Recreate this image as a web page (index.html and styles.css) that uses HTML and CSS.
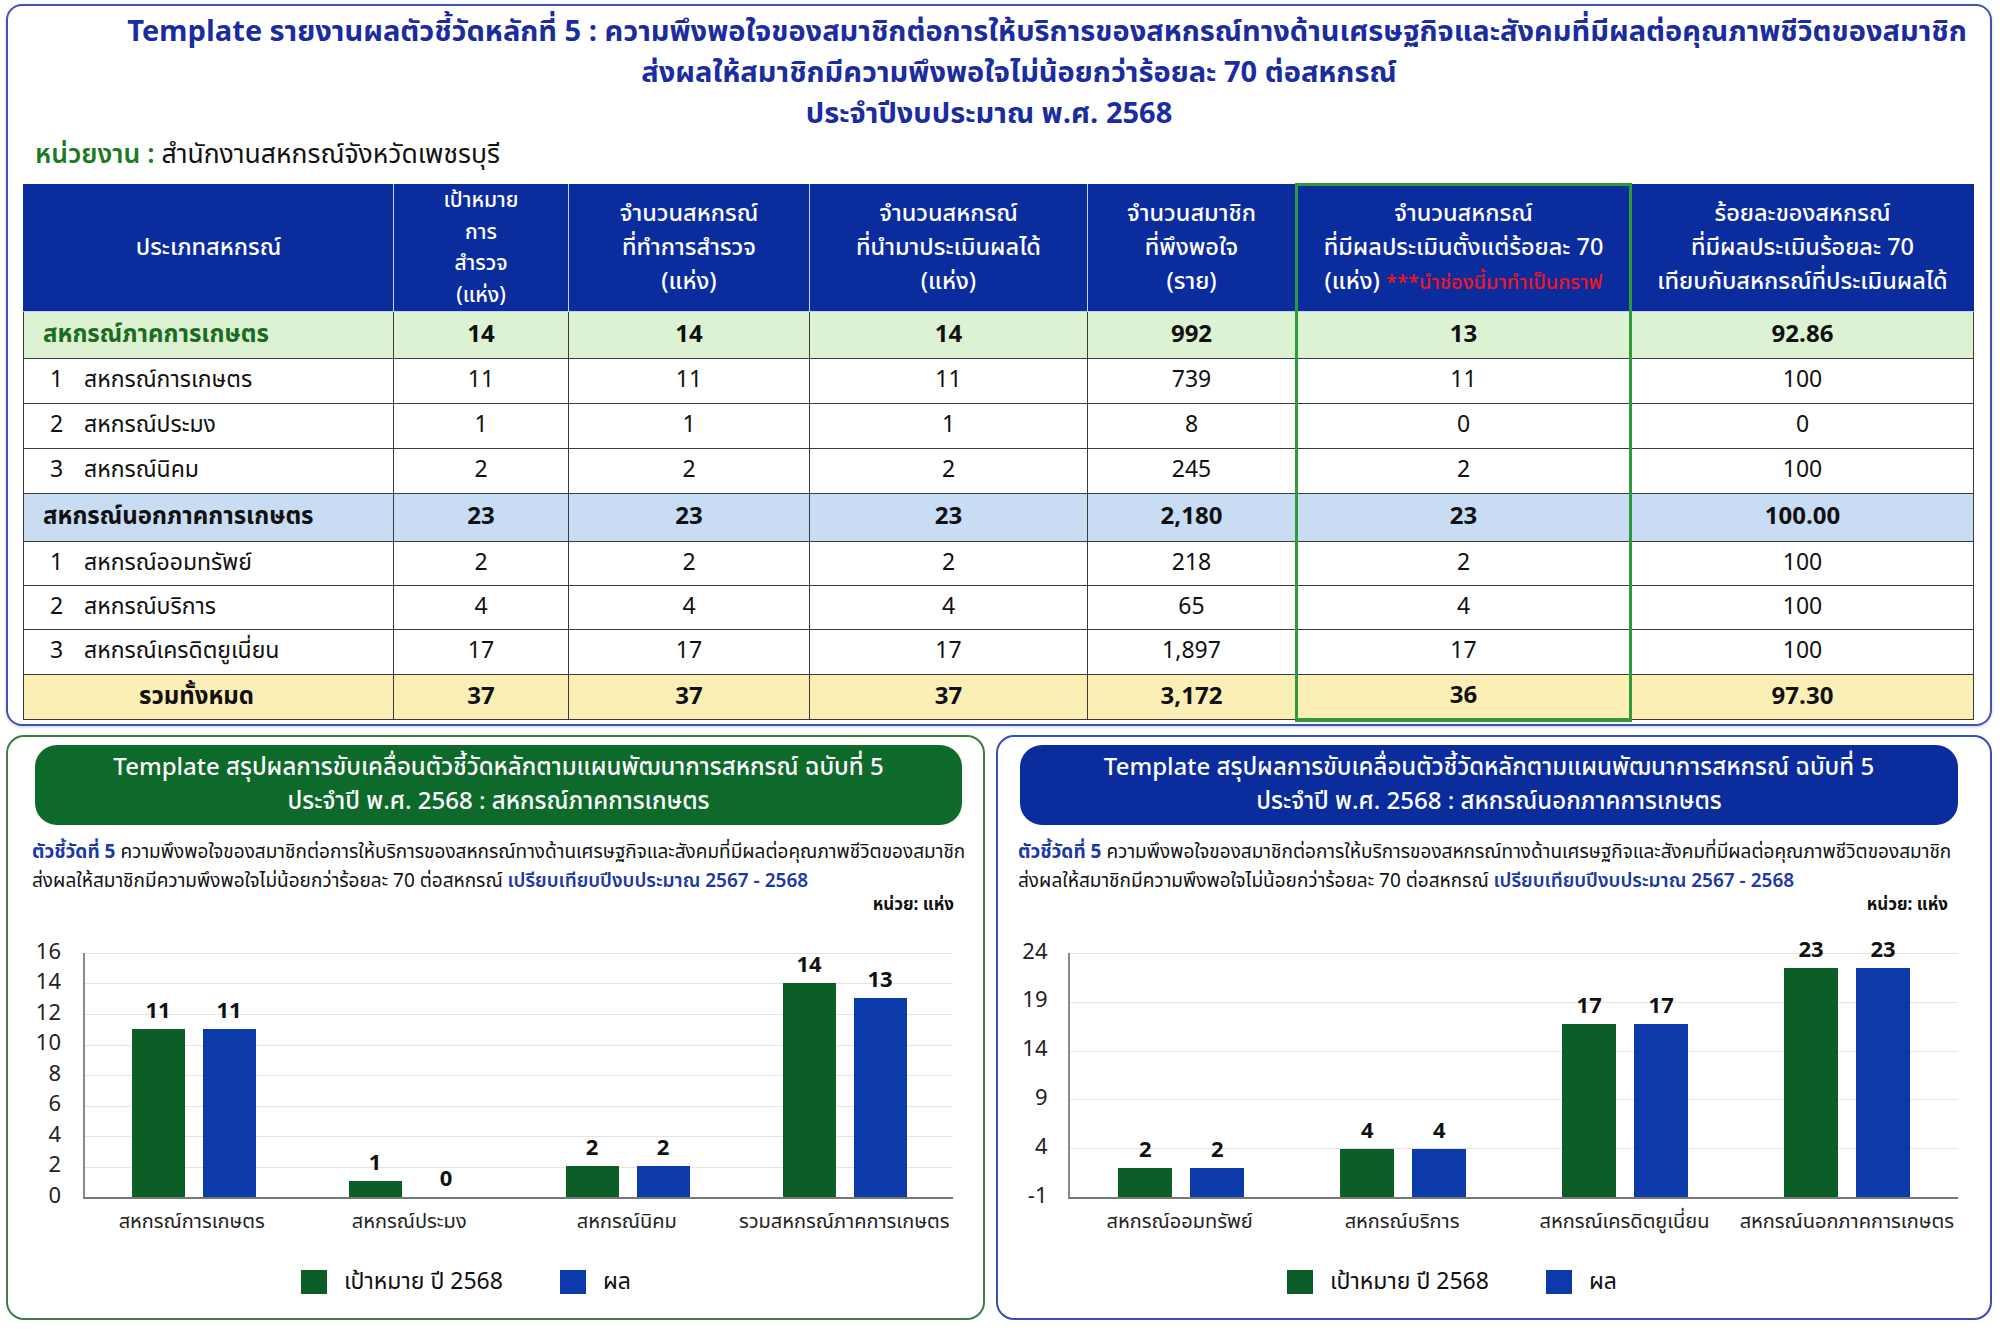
FILE: index.html
```html
<!DOCTYPE html>
<html lang="th">
<head>
<meta charset="utf-8">
<title>Template รายงานผลตัวชี้วัดหลักที่ 5</title>
<link rel="stylesheet" href="styles.css">
</head>
<body>
<div class="page">
  <section class="top-panel">
    <h1 class="title">
      <span class="t-line t1">Template รายงานผลตัวชี้วัดหลักที่ 5 : ความพึงพอใจของสมาชิกต่อการให้บริการของสหกรณ์ทางด้านเศรษฐกิจและสังคมที่มีผลต่อคุณภาพชีวิตของสมาชิก</span>
      <span class="t-line t2">ส่งผลให้สมาชิกมีความพึงพอใจไม่น้อยกว่าร้อยละ 70 ต่อสหกรณ์</span>
      <span class="t-line t3">ประจำปีงบประมาณ พ.ศ. 2568</span>
    </h1>
    <div class="agency"><span class="agency-label">หน่วยงาน :</span> สำนักงานสหกรณ์จังหวัดเพชรบุรี</div>
    <table class="report">
      <colgroup>
        <col class="c1"><col class="c2"><col class="c3"><col class="c4"><col class="c5"><col class="c6"><col class="c7">
      </colgroup>
      <thead>
        <tr>
          <th>ประเภทสหกรณ์</th>
          <th class="tight">เป้าหมาย<br>การ<br>สำรวจ<br>(แห่ง)</th>
          <th>จำนวนสหกรณ์<br>ที่ทำการสำรวจ<br>(แห่ง)</th>
          <th>จำนวนสหกรณ์<br>ที่นำมาประเมินผลได้<br>(แห่ง)</th>
          <th>จำนวนสมาชิก<br>ที่พึงพอใจ<br>(ราย)</th>
          <th class="hl">จำนวนสหกรณ์<br>ที่มีผลประเมินตั้งแต่ร้อยละ 70<br>(แห่ง) <span class="note">***นำช่องนี้มาทำเป็นกราฟ</span></th>
          <th>ร้อยละของสหกรณ์<br>ที่มีผลประเมินร้อยละ 70<br>เทียบกับสหกรณ์ที่ประเมินผลได้</th>
        </tr>
      </thead>
      <tbody>
        <tr class="grp green-row">
          <td class="name grp-name">สหกรณ์ภาคการเกษตร</td><td>14</td><td>14</td><td>14</td><td>992</td><td class="hl">13</td><td>92.86</td>
        </tr>
        <tr class="row">
          <td class="name"><span class="no">1</span>สหกรณ์การเกษตร</td><td>11</td><td>11</td><td>11</td><td>739</td><td class="hl">11</td><td>100</td>
        </tr>
        <tr class="row">
          <td class="name"><span class="no">2</span>สหกรณ์ประมง</td><td>1</td><td>1</td><td>1</td><td>8</td><td class="hl">0</td><td>0</td>
        </tr>
        <tr class="row">
          <td class="name"><span class="no">3</span>สหกรณ์นิคม</td><td>2</td><td>2</td><td>2</td><td>245</td><td class="hl">2</td><td>100</td>
        </tr>
        <tr class="grp blue-row">
          <td class="name">สหกรณ์นอกภาคการเกษตร</td><td>23</td><td>23</td><td>23</td><td>2,180</td><td class="hl">23</td><td>100.00</td>
        </tr>
        <tr class="row r2">
          <td class="name"><span class="no">1</span>สหกรณ์ออมทรัพย์</td><td>2</td><td>2</td><td>2</td><td>218</td><td class="hl">2</td><td>100</td>
        </tr>
        <tr class="row r2">
          <td class="name"><span class="no">2</span>สหกรณ์บริการ</td><td>4</td><td>4</td><td>4</td><td>65</td><td class="hl">4</td><td>100</td>
        </tr>
        <tr class="row">
          <td class="name"><span class="no">3</span>สหกรณ์เครดิตยูเนี่ยน</td><td>17</td><td>17</td><td>17</td><td>1,897</td><td class="hl">17</td><td>100</td>
        </tr>
        <tr class="grp total-row">
          <td class="total-name">รวมทั้งหมด</td><td>37</td><td>37</td><td>37</td><td>3,172</td><td class="hl hl-last">36</td><td>97.30</td>
        </tr>
      </tbody>
    </table>
  </section>

  <div class="bottom">
    <section class="chart-panel panel-green">
      <div class="banner banner-green">Template สรุปผลการขับเคลื่อนตัวชี้วัดหลักตามแผนพัฒนาการสหกรณ์ ฉบับที่ 5<br>ประจำปี พ.ศ. 2568 : สหกรณ์ภาคการเกษตร</div>
      <p class="desc"><b class="kpi">ตัวชี้วัดที่ 5</b> ความพึงพอใจของสมาชิกต่อการให้บริการของสหกรณ์ทางด้านเศรษฐกิจและสังคมที่มีผลต่อคุณภาพชีวิตของสมาชิก<br>ส่งผลให้สมาชิกมีความพึงพอใจไม่น้อยกว่าร้อยละ 70 ต่อสหกรณ์ <span class="cmp">เปรียบเทียบปีงบประมาณ 2567 - 2568</span></p>
      <div class="unit">หน่วย: แห่ง</div>
      <div class="chart chart-left">
        <div class="yaxis">
          <span>16</span><span>14</span><span>12</span><span>10</span><span>8</span><span>6</span><span>4</span><span>2</span><span>0</span>
        </div>
        <div class="chart-body">
          <div class="plot">
            <div class="group">
              <div class="bar-col"><span class="val">11</span><div class="bar g" style="height:168px"></div></div>
              <div class="bar-col"><span class="val">11</span><div class="bar b" style="height:168px"></div></div>
            </div>
            <div class="group">
              <div class="bar-col"><span class="val">1</span><div class="bar g" style="height:16px"></div></div>
              <div class="bar-col"><span class="val">0</span><div class="bar b" style="height:0px"></div></div>
            </div>
            <div class="group">
              <div class="bar-col"><span class="val">2</span><div class="bar g" style="height:31px"></div></div>
              <div class="bar-col"><span class="val">2</span><div class="bar b" style="height:31px"></div></div>
            </div>
            <div class="group">
              <div class="bar-col"><span class="val">14</span><div class="bar g" style="height:214px"></div></div>
              <div class="bar-col"><span class="val">13</span><div class="bar b" style="height:199px"></div></div>
            </div>
          </div>
          <div class="cats">
            <span>สหกรณ์การเกษตร</span><span>สหกรณ์ประมง</span><span>สหกรณ์นิคม</span><span>รวมสหกรณ์ภาคการเกษตร</span>
          </div>
        </div>
      </div>
      <div class="legend legend-left">
        <span class="sw g"></span><span class="lg-text">เป้าหมาย ปี 2568</span>
        <span class="sw b"></span><span class="lg-text">ผล</span>
      </div>
    </section>

    <section class="chart-panel panel-blue">
      <div class="banner banner-blue">Template สรุปผลการขับเคลื่อนตัวชี้วัดหลักตามแผนพัฒนาการสหกรณ์ ฉบับที่ 5<br>ประจำปี พ.ศ. 2568 : สหกรณ์นอกภาคการเกษตร</div>
      <p class="desc"><b class="kpi">ตัวชี้วัดที่ 5</b> ความพึงพอใจของสมาชิกต่อการให้บริการของสหกรณ์ทางด้านเศรษฐกิจและสังคมที่มีผลต่อคุณภาพชีวิตของสมาชิก<br>ส่งผลให้สมาชิกมีความพึงพอใจไม่น้อยกว่าร้อยละ 70 ต่อสหกรณ์ <span class="cmp">เปรียบเทียบปีงบประมาณ 2567 - 2568</span></p>
      <div class="unit">หน่วย: แห่ง</div>
      <div class="chart chart-right">
        <div class="yaxis">
          <span>24</span><span>19</span><span>14</span><span>9</span><span>4</span><span>-1</span>
        </div>
        <div class="chart-body">
          <div class="plot">
            <div class="group">
              <div class="bar-col"><span class="val">2</span><div class="bar g" style="height:29px"></div></div>
              <div class="bar-col"><span class="val">2</span><div class="bar b" style="height:29px"></div></div>
            </div>
            <div class="group">
              <div class="bar-col"><span class="val">4</span><div class="bar g" style="height:48px"></div></div>
              <div class="bar-col"><span class="val">4</span><div class="bar b" style="height:48px"></div></div>
            </div>
            <div class="group">
              <div class="bar-col"><span class="val">17</span><div class="bar g" style="height:173px"></div></div>
              <div class="bar-col"><span class="val">17</span><div class="bar b" style="height:173px"></div></div>
            </div>
            <div class="group">
              <div class="bar-col"><span class="val">23</span><div class="bar g" style="height:229px"></div></div>
              <div class="bar-col"><span class="val">23</span><div class="bar b" style="height:229px"></div></div>
            </div>
          </div>
          <div class="cats">
            <span>สหกรณ์ออมทรัพย์</span><span>สหกรณ์บริการ</span><span>สหกรณ์เครดิตยูเนี่ยน</span><span>สหกรณ์นอกภาคการเกษตร</span>
          </div>
        </div>
      </div>
      <div class="legend legend-right">
        <span class="sw g"></span><span class="lg-text">เป้าหมาย ปี 2568</span>
        <span class="sw b"></span><span class="lg-text">ผล</span>
      </div>
    </section>
  </div>
</div>
</body>
</html>
```

FILE: styles.css
```css
* { box-sizing: border-box; }

html, body {
  margin: 0;
  padding: 0;
  background: #ffffff;
}

body {
  font-family: "Noto Sans Thai", "Noto Sans", "Liberation Sans", sans-serif;
  color: #111;
}

.page {
  width: 2000px;
  height: 1333px;
  padding: 4px 8px 0 6px;
}

/* ---------- top panel ---------- */
.top-panel {
  height: 722px;
  border: 2px solid #4253ad;
  border-radius: 16px;
  padding: 6px 17px 0 15px;
  box-shadow: 0 1px 3px rgba(40, 60, 140, 0.25);
}

.title {
  margin: 0;
  font-size: 29px;
  line-height: 41px;
  font-weight: 700;
  color: #1a2c9e;
  text-align: center;
  white-space: nowrap;
}

.t-line { display: block; }
.t1 { padding-left: 98px; }
.t2 { padding-left: 42px; }
.t3 { padding-right: 18px; }

.agency {
  margin: 2px 0 0 12px;
  font-size: 26.5px;
  line-height: 36px;
  color: #111;
  white-space: nowrap;
}

.agency-label {
  color: #1c7a22;
  font-weight: 600;
}

.report {
  margin-top: 10px;
  width: 1950px;
  border-collapse: collapse;
  table-layout: fixed;
  font-size: 23px;
}

.c1 { width: 370px; }
.c2 { width: 175px; }
.c3 { width: 241px; }
.c4 { width: 278px; }
.c5 { width: 209px; }
.c6 { width: 334px; }
.c7 { width: 343px; }

.report th {
  height: 127px;
  background: #0a2c9c;
  color: #fff;
  font-weight: 500;
  font-size: 23.5px;
  line-height: 34px;
  text-align: center;
  vertical-align: middle;
  border: 1px solid #c8d0ee;
  border-top-color: #0a2c9c;
  padding: 0 2px;
  white-space: nowrap;
}

.report th:first-child { border-left-color: #0a2c9c; }
.report th:last-child { border-right-color: #0a2c9c; }

.report th.tight { font-size: 21px; line-height: 31.5px; }

.note { color: #f0161e; font-size: 20px; }

.report td {
  border: 1px solid #3a3a3a;
  text-align: center;
  vertical-align: middle;
  padding: 0;
  height: 45px;
  line-height: 1.2;
  white-space: nowrap;
}

.report tr.r2 td { height: 44px; }
.report tr.grp td { font-weight: 700; font-size: 24px; }
.report tr.green-row td { height: 47px; background: #dcf2d2; }
.report tr.blue-row td { height: 48px; background: #c8dcf4; }
.report tr.total-row td { height: 45px; background: #fcefb6; }

.report td.name {
  text-align: left;
  padding-left: 20px;
}

.report tr.grp td.name { padding-left: 19px; }
.report td.grp-name { color: #1c6b22; }

.no {
  display: inline-block;
  width: 40px;
  padding-left: 6px;
}

.report td.total-name { text-align: center; padding-right: 24px; }

.report .hl {
  border-left: 3px solid #2f9a3c;
  border-right: 3px solid #2f9a3c;
}
.report th.hl { border-top: 3px solid #2f9a3c; }
.report td.hl-last { border-bottom: 4px solid #2f9a3c; }

/* ---------- bottom panels ---------- */
.bottom {
  margin-top: 9px;
  display: grid;
  grid-template-columns: 979px 996px;
  column-gap: 11px;
}

.chart-panel {
  height: 585px;
  border: 2px solid;
  border-radius: 18px;
}

.panel-green { border-color: #3f7d45; padding: 8px 21px 0 0; }
.panel-blue { border-color: #3a4eb0; padding: 8px 32px 0 0; }

.banner {
  height: 80px;
  border-radius: 22px;
  color: #fff;
  font-size: 24px;
  font-weight: 500;
  line-height: 34px;
  text-align: center;
  display: flex;
  align-items: center;
  justify-content: center;
  white-space: nowrap;
}

.banner-green { background: #0d6a2a; margin-left: 27px; }
.banner-blue { background: #0a2c9c; margin-left: 22px; }

.desc {
  margin: 13px 0 0 24px;
  font-size: 19px;
  line-height: 29px;
  color: #111;
  white-space: nowrap;
}

.panel-blue .desc { margin-left: 20px; }

.kpi { color: #1a38a6; }
.cmp { color: #1a38a6; font-weight: 600; }

.unit {
  margin: -3px 8px 0 0;
  text-align: right;
  font-weight: 700;
  font-size: 17px;
  line-height: 24px;
}

.panel-blue .unit { margin-right: 10px; }

/* ---------- charts ---------- */
.chart { display: flex; }
.chart-left { margin-top: 20.75px; }
.chart-right { margin-top: 11.6px; }

.yaxis {
  display: flex;
  flex-direction: column;
  text-align: right;
  font-size: 22px;
  color: #222;
}

.chart-left .yaxis { width: 75px; padding-right: 22px; }
.chart-left .yaxis span { height: 30.5px; line-height: 30.5px; }

.chart-right .yaxis { width: 71px; padding-right: 21px; }
.chart-right .yaxis span { height: 48.8px; line-height: 48.8px; }

.chart-body { display: flex; flex-direction: column; }

.chart-left .chart-body { width: 870px; padding-top: 15.25px; }
.chart-right .chart-body { width: 899px; padding-top: 24.4px; }

.plot {
  display: flex;
  height: 244px;
  border-left: 2px solid #8a8a8a;
  border-bottom: 2px solid #777;
  box-sizing: content-box;
}

.chart-left .plot {
  background: repeating-linear-gradient(to bottom, #e4e4e4 0, #e4e4e4 1px, transparent 1px, transparent 30.5px);
}

.chart-right .plot {
  background: repeating-linear-gradient(to bottom, #e4e4e4 0, #e4e4e4 1px, transparent 1px, transparent 48.8px);
}

.group {
  flex: 1;
  display: flex;
  align-items: flex-end;
  justify-content: center;
  gap: 18px;
}

.bar-col {
  display: flex;
  flex-direction: column;
  align-items: center;
}

.chart-left .bar-col { width: 53px; }
.chart-right .bar-col { width: 54px; }

.val {
  font-size: 22px;
  font-weight: 700;
  line-height: 28px;
  margin-bottom: 3px;
}

.bar { width: 100%; }
.bar.g, .sw.g { background: #0b5e25; }
.bar.b, .sw.b { background: #0c3aa8; }

.cats {
  display: flex;
  margin-top: 8px;
}

.cats span {
  flex: 1;
  text-align: center;
  font-size: 20px;
  line-height: 30px;
  color: #222;
  white-space: nowrap;
}

.legend {
  display: flex;
  align-items: center;
  margin-top: 31px;
  font-size: 23px;
  line-height: 28px;
}

.legend-left { padding-left: 293px; }
.legend-right { padding-left: 289px; }

.sw {
  width: 26px;
  height: 24px;
  margin-right: 17px;
}

.lg-text { margin-right: 57px; }
```
